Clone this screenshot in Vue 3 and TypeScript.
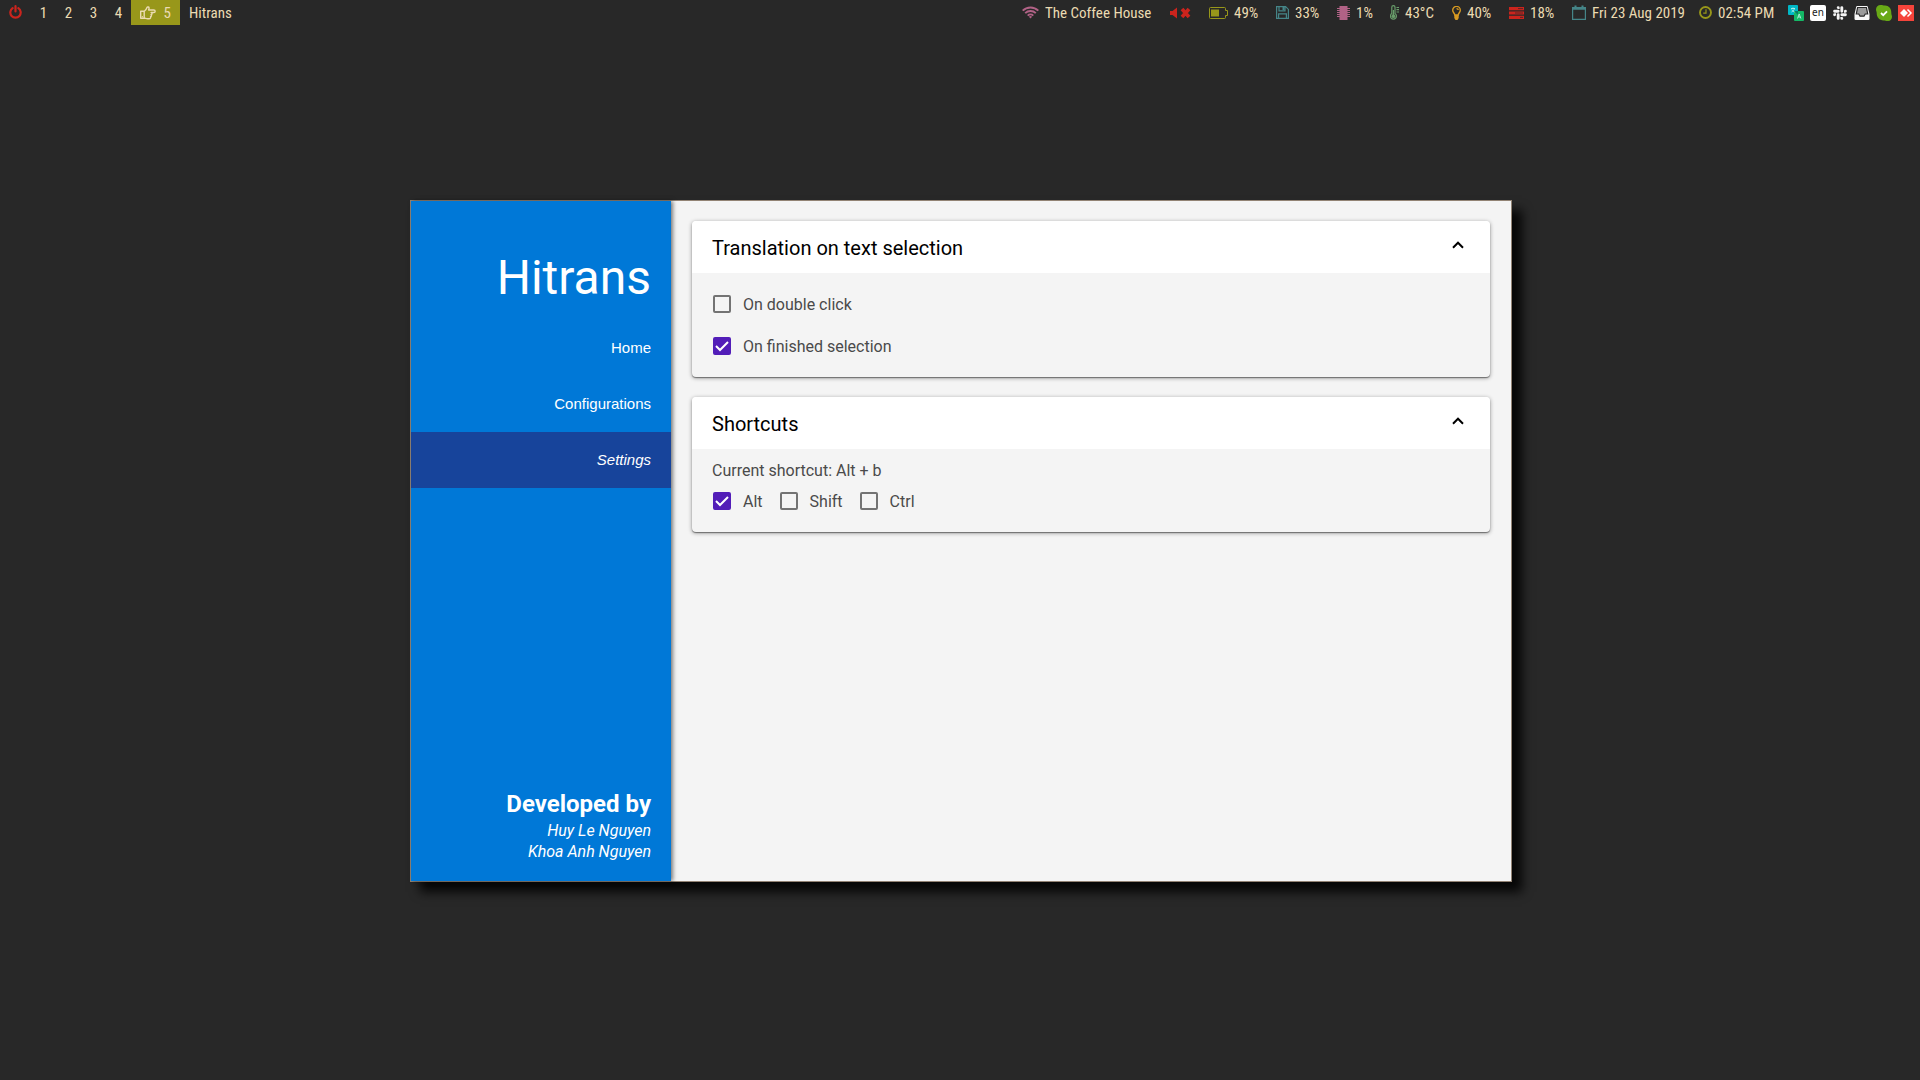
<script setup lang="ts">
import { computed, reactive, ref } from 'vue'

interface Shortcut {
  name: string
  active: boolean
}

const workspaces: string[] = ['1', '2', '3', '4']
const navigation: string[] = ['Home', 'Configurations', 'Settings']
const currentPage = ref('Settings')

const doubleClick = ref(false)
const finishedSelection = ref(true)
const selectionOpen = ref(true)
const shortcutsOpen = ref(true)

const modifiers = reactive<Shortcut[]>([
  { name: 'Alt', active: true },
  { name: 'Shift', active: false },
  { name: 'Ctrl', active: false },
])

const shortcutText = computed(() =>
  [...modifiers.filter((m) => m.active).map((m) => m.name), 'b'].join(' + '),
)
</script>

<template>
  <div class="desktop">
    <header class="bar">
      <div class="bar-side">
        <button class="power" type="button" aria-label="Power">
          <svg width="13" height="14" viewBox="0 0 13 14" fill="none" stroke="currentColor" stroke-width="2.2" stroke-linecap="round">
            <path d="M3.6 3.2A5.2 5.2 0 1 0 9.4 3.200M6.500 1.200v5.200" />
          </svg>
        </button>
        <button v-for="w in workspaces" :key="w" class="workspace" type="button">{{ w }}</button>
        <button class="workspace focused" type="button">
          <svg width="16" height="14" viewBox="0 0 16 14" fill="none" stroke="currentColor" stroke-width="1.4" stroke-linejoin="round">
            <path d="M4.2 5.4C5.8 4.6 6.4 3.2 7 1.6 7.4.5 9.4.8 9 2.6L8.6 4h5.2c1.8 0 1.8 2.5 0 2.5h-2.7c1.3.4 1.2 2-.1 2.2.8.6.5 1.900-.5 2 .5.9-.1 2-1.500 2H7.600c-1.600 0-2.200-.7-3.400-.7M.7 5.200h3.500v7H.7z" />
            <path d="M1.800 10.800h1" />
          </svg>
          <span>5</span>
        </button>
        <span class="window-title">Hitrans</span>
      </div>

      <div class="bar-side status">
        <span class="module">
          <svg class="purple" width="17" height="13" viewBox="0 0 17 13" fill="none" stroke="currentColor" stroke-width="1.9">
            <path d="M.7 4.700a11 11 0 0 1 15.600 0M3.200 7.200a7.500 7.500 0 0 1 10.600 0M5.700 9.600a4 4 0 0 1 5.600 0" />
            <path d="M6.900 10.800a2.300 2.300 0 0 1 3.200 0L8.500 12.500z" fill="currentColor" stroke="none" />
          </svg>
          <span class="wide">The Coffee House</span>
        </span>
        <span class="module">
          <svg class="red" width="21" height="12" viewBox="0 0 21 12" fill="currentColor">
            <path d="M0 4h2.500L7 .5v11L2.500 8H0z" />
            <path d="M12 2l7 8M19 2l-7 8" fill="none" stroke="currentColor" stroke-width="3.600" />
          </svg>
        </span>
        <span class="module">
          <svg class="green" width="19" height="12" viewBox="0 0 19 12" fill="currentColor">
            <path d="M.5 1.500a1 1 0 0 1 1-1h14a1 1 0 0 1 1 1v2h2v5h-2v2a1 1 0 0 1-1 1h-14a1 1 0 0 1-1-1z" fill="none" stroke="currentColor" />
            <path d="M2 2.500h8v7H2z" />
          </svg>
          <span>49%</span>
        </span>
        <span class="module">
          <svg class="blue" width="13" height="13" viewBox="0 0 13 13" fill="none" stroke="currentColor" stroke-width="1.200">
            <path d="M.6.6h9L12.400 3.400v9H.6zM3 .6v4.200h6V.6M2.600 12.400V7.800h7.800v4.600" />
            <path d="M6.500 1h2v3h-2z" fill="currentColor" stroke="none" />
          </svg>
          <span>33%</span>
        </span>
        <span class="module">
          <svg class="purple" width="13" height="14" viewBox="0 0 13 14" fill="currentColor">
            <path d="M2.500 0h8v14h-8z" />
            <path d="M0 2.500h13M0 4.500h13M0 6.500h13M0 8.500h13M0 10.500h13" stroke="currentColor" stroke-width="1" />
          </svg>
          <span class="narrow">1%</span>
        </span>
        <span class="module">
          <svg class="aqua" width="9" height="15" viewBox="0 0 9 15" fill="none" stroke="currentColor" stroke-width="1.200">
            <path d="M1.800 8.600V2.300a1.600 1.600 0 0 1 3.200 0v6.300a3 3 0 1 1-3.200 0zM6.500 2.500H9M6.500 4.700H9M6.500 7H9" />
            <circle cx="3.400" cy="11.200" r="1.900" fill="currentColor" stroke="none" />
            <path d="M3.400 5v6" />
          </svg>
          <span class="temp">43°C</span>
        </span>
        <span class="module">
          <svg class="yellow" width="9" height="14" viewBox="0 0 9 14" fill="none" stroke="currentColor" stroke-width="1.400">
            <path d="M2.800 9c0-1.700-2.100-2.500-2.100-4.800a3.800 3.800 0 0 1 7.600 0C8.300 6.500 6.200 7.300 6.200 9zM4.500 2.600c1 0 1.700.6 1.700 1.500" />
            <path d="M2.300 9h4.400v3L5.500 14h-2L2.300 12z" fill="currentColor" stroke="none" />
          </svg>
          <span>40%</span>
        </span>
        <span class="module">
          <svg class="red" width="15" height="12" viewBox="0 0 15 12" fill="currentColor">
            <path d="M0 0h15v3.200H0zM0 4.400h15v3.200H0zM0 8.800h15V12H0z" />
            <path d="M9 1.600h5M6 6h8M11 10.400h3" stroke="#282828" stroke-width=".7" />
          </svg>
          <span>18%</span>
        </span>
        <span class="module">
          <svg class="blue" width="14" height="15" viewBox="0 0 14 15" fill="none" stroke="currentColor" stroke-width="1.200">
            <path d="M.6 2.600h12.800v11.800H.6z" />
            <path d="M.6 2.500h12.800v2.300H.6zM2.500.4h2v3h-2zM9.500.4h2v3h-2z" fill="currentColor" stroke="none" />
          </svg>
          <span class="date">Fri 23 Aug 2019</span>
        </span>
        <span class="module">
          <svg class="green" width="13" height="13" viewBox="0 0 13 13" fill="none" stroke="currentColor">
            <circle cx="6.500" cy="6.500" r="5.500" stroke-width="1.900" />
            <path d="M7 3.300v3.900H4.200" stroke-width="1.200" />
          </svg>
          <span class="time">02:54 PM</span>
        </span>

        <div class="tray">
          <svg width="16" height="16" viewBox="0 0 16 16">
            <rect width="10" height="10" rx="1" fill="#00b7c6" />
            <rect x="6" y="6" width="10" height="10" rx="1" fill="#14b866" />
            <path d="M6 6h4v4z" fill="#087d68" />
            <path d="M3 3.500h4M5 2.500v1M6.500 3.500c-.5 2-2 3-3 3.500M3.700 4.500C4.500 6 5.500 6.600 6.600 7M9.500 13.500l1.700-4.500 1.700 4.500M10.200 12h2" fill="none" stroke="#c9f4ee" stroke-width=".8" />
          </svg>
          <div class="keyboard">en</div>
          <svg width="16" height="16" viewBox="-2 -2 28 28" fill="#f5f5f5">
            <path d="M5.042 15.165a2.528 2.528 0 0 1-2.520 2.523A2.528 2.528 0 0 1 0 15.165a2.527 2.527 0 0 1 2.522-2.520h2.520v2.520zM6.313 15.165a2.527 2.527 0 0 1 2.521-2.520 2.527 2.527 0 0 1 2.521 2.520v6.313A2.528 2.528 0 0 1 8.834 24a2.528 2.528 0 0 1-2.521-2.522v-6.313zM8.834 5.042a2.528 2.528 0 0 1-2.521-2.520A2.528 2.528 0 0 1 8.834 0a2.528 2.528 0 0 1 2.521 2.522v2.520H8.834zM8.834 6.313a2.528 2.528 0 0 1 2.521 2.521 2.528 2.528 0 0 1-2.521 2.521H2.522A2.528 2.528 0 0 1 0 8.834a2.528 2.528 0 0 1 2.522-2.521h6.312zM18.956 8.834a2.528 2.528 0 0 1 2.522-2.521A2.528 2.528 0 0 1 24 8.834a2.528 2.528 0 0 1-2.522 2.521h-2.522V8.834zM17.688 8.834a2.528 2.528 0 0 1-2.523 2.521 2.527 2.527 0 0 1-2.520-2.521V2.522A2.527 2.527 0 0 1 15.165 0a2.528 2.528 0 0 1 2.523 2.522v6.312zM15.165 18.956a2.528 2.528 0 0 1 2.523 2.522A2.528 2.528 0 0 1 15.165 24a2.527 2.527 0 0 1-2.520-2.522v-2.522h2.520zM15.165 17.688a2.527 2.527 0 0 1-2.520-2.523 2.526 2.526 0 0 1 2.520-2.520h6.313A2.527 2.527 0 0 1 24 15.165a2.528 2.528 0 0 1-2.522 2.523h-6.313z" />
          </svg>
          <svg width="16" height="16" viewBox="0 0 16 16">
            <path d="M3.200 1h9.600a1 1 0 0 1 1 .8L15.500 9v4.800a1.200 1.200 0 0 1-1.200 1.200H1.700A1.200 1.200 0 0 1 .5 13.800V9l1.700-7.200a1 1 0 0 1 1-.8z" fill="#f8f8f8" />
            <path d="M3.600 2.500h8.800l1.300 6.500h-2.500L10 11.200H6L4.800 9H2.300z" fill="#9b9b9b" stroke="#282828" stroke-width="1.200" />
          </svg>
          <svg width="16" height="16" viewBox="0 0 16 16">
            <path d="M4.500 0C7 0 7 .6 9 .6c4 0 6.500 3.400 6.300 7.400 0 2 .7 2 .7 4a4 4 0 0 1-4.500 4c-2 0-2-.6-4-.6C3.300 15.400.6 12 .7 8 .7 6.500 0 6 0 4.500A4.500 4.500 0 0 1 4.500 0z" fill="#68a916" />
            <path d="M5 8l2.200 2.200L11 6.300" fill="none" stroke="#fff" stroke-width="1.800" />
          </svg>
          <svg width="16" height="16" viewBox="0 0 16 16">
            <path d="M0 0h16v16H0z" fill="#f5443b" />
            <path d="M6 4l4 4-4 4-4-4z" fill="#fff" />
            <path d="M9.500 4.500L13 8l-3.500 3.500" fill="none" stroke="#fff" stroke-width="1.500" />
          </svg>
        </div>
      </div>
    </header>

    <div class="workspace-area">
      <div class="app-window">
        <aside class="sidebar">
          <h1>Hitrans</h1>
          <nav>
            <a
              v-for="page in navigation"
              :key="page"
              href="#"
              :class="{ current: page === currentPage }"
              @click.prevent="currentPage = page"
            >{{ page }}</a>
          </nav>
          <footer>
            <h2>Developed by</h2>
            <p>Huy Le Nguyen</p>
            <p>Khoa Anh Nguyen</p>
          </footer>
        </aside>

        <main>
          <section class="card">
            <button class="card-head" type="button" :aria-expanded="selectionOpen" @click="selectionOpen = !selectionOpen">
              <span>Translation on text selection</span>
              <svg class="chevron" :class="{ closed: !selectionOpen }" width="12" height="8" viewBox="0 0 12 8" fill="none" stroke="#000" stroke-width="2">
                <path d="M1 6.700l5-5 5 5" />
              </svg>
            </button>
            <div v-show="selectionOpen" class="card-body">
              <label class="check"><input v-model="doubleClick" type="checkbox" />On double click</label>
              <label class="check"><input v-model="finishedSelection" type="checkbox" />On finished selection</label>
            </div>
          </section>

          <section class="card">
            <button class="card-head" type="button" :aria-expanded="shortcutsOpen" @click="shortcutsOpen = !shortcutsOpen">
              <span>Shortcuts</span>
              <svg class="chevron" :class="{ closed: !shortcutsOpen }" width="12" height="8" viewBox="0 0 12 8" fill="none" stroke="#000" stroke-width="2">
                <path d="M1 6.700l5-5 5 5" />
              </svg>
            </button>
            <div v-show="shortcutsOpen" class="card-body">
              <p>Current shortcut: {{ shortcutText }}</p>
              <div class="modifiers">
                <label v-for="m in modifiers" :key="m.name" class="check">
                  <input v-model="m.active" type="checkbox" />{{ m.name }}
                </label>
              </div>
            </div>
          </section>
        </main>
      </div>
    </div>
  </div>
</template>

<style>
body {
  margin: 0;
  background: #282828;
}
</style>

<style scoped>
* {
  box-sizing: border-box;
}

button {
  border: 0;
  padding: 0;
  background: none;
  color: inherit;
  font: inherit;
  cursor: pointer;
}

h1,
h2,
p {
  margin: 0;
}

svg {
  display: block;
  flex: none;
}

.desktop {
  display: flex;
  flex-direction: column;
  min-height: 100vh;
  background: #282828;
  font-family: Roboto, sans-serif;
}

.bar {
  display: flex;
  justify-content: space-between;
  height: 25px;
  color: #ebdbb2;
  font: 15px/23px 'Roboto Condensed', 'Liberation Sans Narrow', Roboto, sans-serif;
  white-space: nowrap;
}

.bar-side {
  display: flex;
  align-items: center;
}

.bar-side span {
  padding-top: 2px;
}

.bar-side .module {
  padding-top: 0;
}

.power {
  padding: 0 9px 2px;
  color: #cc241d;
}

.workspace {
  width: 25px;
  height: 25px;
  padding-top: 2px;
  text-align: center;
}

.workspace.focused {
  display: flex;
  align-items: center;
  justify-content: space-between;
  width: 49px;
  padding: 0 9px;
  background: #98971a;
}

.window-title {
  margin-left: 9px;
}

.status {
  gap: 18px;
  padding-right: 6px;
}

.module {
  display: flex;
  align-items: center;
  gap: 6px;
}

.module span {
  width: 24px;
}

.module .narrow {
  width: 16px;
}

.module .temp {
  width: 29px;
}

.module .time {
  width: 52px;
}

.module .date {
  width: 89px;
}

.module .wide {
  width: 107px;
}

.red { color: #cc241d; }
.green { color: #98971a; }
.yellow { color: #d79921; }
.blue { color: #458588; }
.purple { color: #b16286; }
.aqua { color: #689d6a; }

.tray {
  display: flex;
  gap: 6px;
}

.keyboard {
  width: 16px;
  height: 16px;
  border-radius: 2px;
  background: #fff;
  color: #222;
  font: 10px/15px 'Noto Sans', sans-serif;
  text-align: center;
}

.workspace-area {
  flex: 1;
  display: flex;
  align-items: center;
  justify-content: center;
  padding: 0 0 23px 2px;
}

.app-window {
  display: flex;
  width: 1102px;
  max-width: 100%;
  min-height: 682px;
  border: 1px solid #928374;
  background: #f4f4f4;
  box-shadow: 10px 10px 10px rgba(0, 0, 0, 0.85);
}

.sidebar {
  z-index: 1;
  display: flex;
  flex-direction: column;
  flex: none;
  width: 260px;
  background: #0078d7;
  color: #fff;
  text-align: right;
  box-shadow: 2px 0 4px rgba(0, 0, 0, 0.5);
}

.sidebar h1 {
  padding: 49px 20px 14px;
  font-size: 48px;
  font-weight: 400;
  line-height: 56px;
}

.sidebar a {
  display: block;
  padding: 0 20px;
  color: #fff;
  font: 15px/56px 'Liberation Sans', Arial, sans-serif;
  text-decoration: none;
}

.sidebar a.current {
  background: #17449b;
  font-style: italic;
}

.sidebar footer {
  margin-top: auto;
  padding: 0 20px 19px;
  font-size: 16px;
  font-style: italic;
  line-height: 21px;
}

.sidebar h2 {
  font-size: 24px;
  font-style: normal;
  line-height: 32px;
}

main {
  display: flex;
  flex-direction: column;
  gap: 20px;
  flex: 1;
  padding: 20px 21px;
}

.card {
  overflow: hidden;
  border-radius: 4px;
  background: #f4f4f4;
  box-shadow: 0 1px 4px rgba(0, 0, 0, 0.4), 0 1px 1px rgba(0, 0, 0, 0.4);
}

.card-head {
  display: flex;
  align-items: center;
  justify-content: space-between;
  width: 100%;
  height: 52px;
  padding: 2px 26px 0 20px;
  background: #fff;
  color: #000;
  font-size: 20px;
}

.chevron {
  margin-bottom: 6px;
}

.chevron.closed {
  transform: rotate(180deg);
}

.card-body {
  padding: 10px 20px;
  color: #4a4a4a;
  font-size: 16px;
}

.card-body p {
  padding-top: 2px;
  line-height: 19px;
}

.check {
  display: flex;
  align-items: center;
  gap: 12px;
  height: 42px;
}

.check input {
  appearance: none;
  width: 18px;
  height: 18px;
  margin: 0 0 0 1px;
  border: 2px solid #737373;
  border-radius: 2px;
}

.check input:checked {
  border-color: #521db8;
  background: #521db8 url("data:image/svg+xml,%3Csvg xmlns='http://www.w3.org/2000/svg' viewBox='0 0 14 14'%3E%3Cpath d='M1 7l4 4 8-8' fill='none' stroke='white' stroke-width='2'/%3E%3C/svg%3E") center / 14px 14px;
}

.modifiers {
  display: flex;
  gap: 16px;
}
</style>
